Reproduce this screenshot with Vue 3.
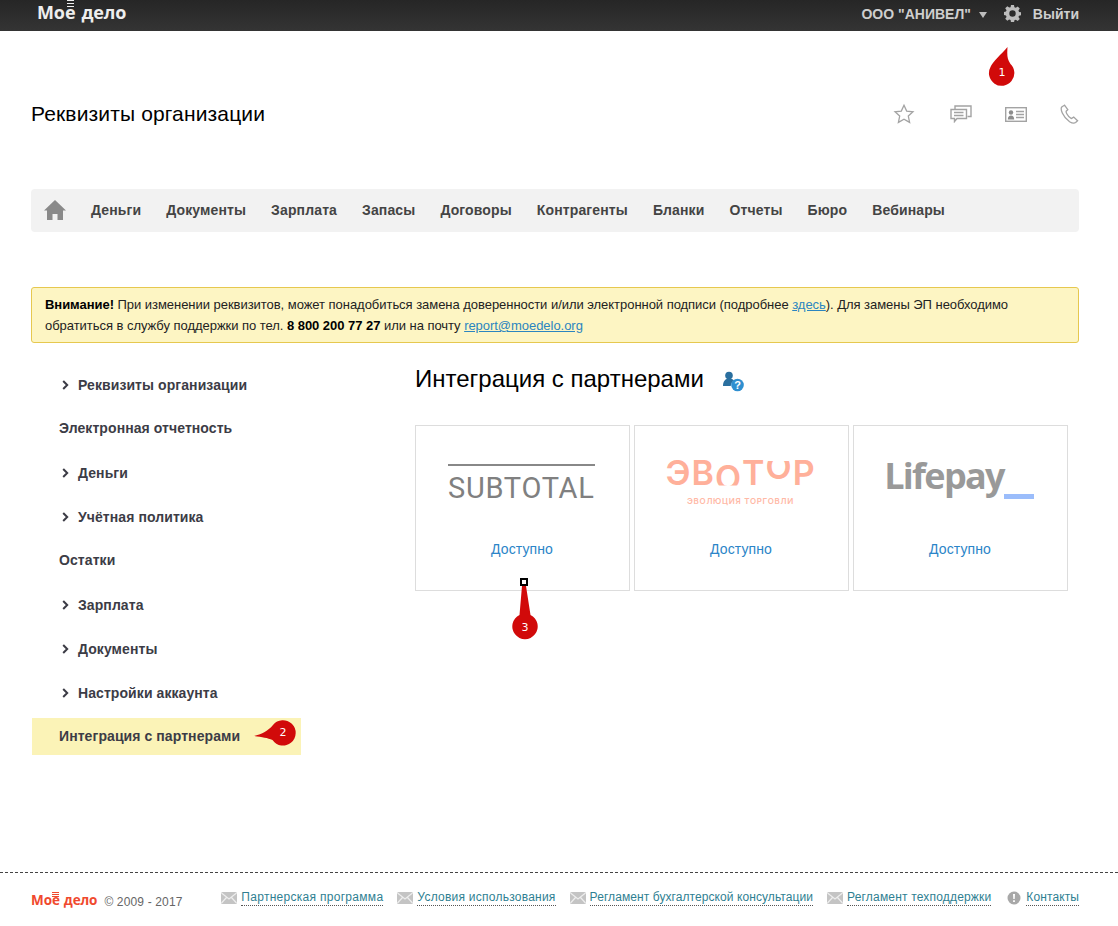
<script setup>
const nav = ['Деньги','Документы','Зарплата','Запасы','Договоры','Контрагенты','Бланки','Отчеты','Бюро','Вебинары']
const side = [
  { t: 'Реквизиты организации', arrow: true },
  { t: 'Электронная отчетность' },
  { t: 'Деньги', arrow: true },
  { t: 'Учётная политика', arrow: true },
  { t: 'Остатки' },
  { t: 'Зарплата', arrow: true },
  { t: 'Документы', arrow: true },
  { t: 'Настройки аккаунта', arrow: true },
  { t: 'Интеграция с партнерами', active: true }
]
const links = [
  { t: 'Партнерская программа', ls: 0.29 },
  { t: 'Условия использования', ls: 0.24 },
  { t: 'Регламент бухгалтерской консультации', ls: 0.08 },
  { t: 'Регламент техподдержки', ls: 0.18 }
]
</script>

<template>
  <div class="page">
    <header class="topbar">
      <div class="logo">Мое<span class="logo-gap"></span>дело<i class="bars"></i></div>
      <div class="top-right">
        <span class="org">ООО "АНИВЕЛ"</span>
        <span class="caret"></span>
        <svg class="gear" width="17" height="17" viewBox="0 0 18 18"><path fill="#bdbdbd" fill-rule="evenodd" d="M7.400 0h3.200l.4 2.400 1.500.6 2-1.400 2.200 2.200-1.400 2 .6 1.500 2.100.4v3.200l-2.100.4-.6 1.500 1.400 2-2.200 2.200-2-1.400-1.500.6-.4 2.300H7.400L7 16l-1.500-.6-2 1.400-2.200-2.200 1.400-2L2.100 11 0 10.600V7.400L2.100 7l.6-1.500-1.400-2 2.200-2.200 2 1.400L7 2.400zM9 5.600a3.400 3.400 0 1 0 0 6.800 3.400 3.400 0 0 0 0-6.800z"/></svg>
        <span class="exit">Выйти</span>
      </div>
    </header>

    <div class="title-row">
      <h1>Реквизиты организации</h1>
      <div class="tools">
        <svg class="star" width="22" height="22" viewBox="0 0 22 22"><path fill="none" stroke="#a3a3a3" stroke-width="1.300" d="M11 2.200l2.700 5.900 6.300.7-4.700 4.300 1.300 6.300-5.600-3.200-5.600 3.200 1.300-6.300L2 8.800l6.300-.7z"/></svg>
        <svg width="22" height="18" viewBox="0 0 22 18"><g fill="none" stroke="#a3a3a3" stroke-width="1.400"><path d="M5 4V1h16v10.500h-3.500"/><path d="M1 4.500h15.500v9H7L4.500 16.500v-3H1z" fill="#fff"/><path d="M4 7.500h9.500M4 10.500h9.500"/></g></svg>
        <svg width="22" height="15" viewBox="0 0 22 15"><rect x=".7" y=".7" width="20.600" height="13.600" fill="none" stroke="#a3a3a3" stroke-width="1.400"/><circle cx="6" cy="5.500" r="2.200" fill="#8c8c8c"/><path fill="#8c8c8c" d="M2.800 12.500c0-2.700 1.300-4 3.200-4s3.200 1.300 3.200 4z"/><path stroke="#a3a3a3" stroke-width="1.400" d="M11 4.500h8M11 7.500h8M11 10.500h8"/></svg>
        <svg width="19" height="20" viewBox="0 0 19 20"><path fill="none" stroke="#a3a3a3" stroke-width="1.300" d="M4.500 1.200L2 2.700C.8 3.700 1 6 2.300 9c1.500 3.400 4 6.300 7.300 8.700 2.700 1.700 4.700 1.900 6 .9l2-1.800-3.900-3.700-2.300 1.500C9.700 13.900 8 12 6.800 9.700 6.100 8.400 6 7.600 6.200 7.200l1.600-1.500z"/></svg>
      </div>
    </div>

    <nav class="menu">
      <svg width="22" height="20" viewBox="0 0 22 20"><path fill="#8a8a8a" d="M11 0l11 10.500h-3V20h-5.500v-6h-5v6H3V10.500H0z"/></svg>
      <a v-for="n in nav" :key="n">{{ n }}</a>
    </nav>

    <div class="alert">
      <b>Внимание!</b> При изменении реквизитов, может понадобиться замена доверенности и/или электронной подписи (подробнее <a>здесь</a>). Для замены ЭП необходимо обратиться в службу поддержки по тел. <b>8 800 200 77 27</b> или на почту <a>report@moedelo.org</a>
    </div>

    <div class="columns">
      <aside class="side">
        <div v-for="s in side" :key="s.t" class="side-item" :class="{ active: s.active, plain: !s.arrow }">
          <svg v-if="s.arrow" class="chev" width="7" height="10" viewBox="0 0 7 10"><path fill="none" stroke="#3c3c46" stroke-width="2" d="M1.200 1l4 4-4 4"/></svg>
          <span>{{ s.t }}</span>
        </div>
      </aside>
      <main class="main">
        <div class="heading">
          <h2>Интеграция с партнерами</h2>
          <svg width="21" height="21" viewBox="0 0 21 21"><circle cx="6" cy="4.500" r="3.800" fill="#2a6f9f"/><path fill="#2a6f9f" d="M0 15c0-5 2.500-7.500 6-7.500 2.500 0 4 .8 5 2.200-2 1-3.200 3-3.200 5.300z"/><circle cx="14.500" cy="14" r="6.300" fill="#2f8fd0"/><text x="14.500" y="18" text-anchor="middle" class="q">?</text></svg>
        </div>
        <div class="cards">
          <div class="card">
            <div class="brand">
              <div class="subtotal">SUBTOTAL</div>
            </div>
            <a>Доступно</a>
          </div>
          <div class="card">
            <div class="brand">
              <div class="evotor">
                <div class="evo-name">ЭВ<span class="o-up">О</span>Т<span class="o-down">О</span>Р</div>
                <div class="evo-sub">ЭВОЛЮЦИЯ ТОРГОВЛИ</div>
              </div>
            </div>
            <a>Доступно</a>
          </div>
          <div class="card">
            <div class="brand">
              <div class="lifepay">Lifepay<i></i></div>
            </div>
            <a>Доступно</a>
          </div>
        </div>
      </main>
    </div>

    <footer class="footer">
      <div class="flogo">Мое<span class="logo-gap small"></span>дело<i class="bars small"></i></div>
      <span class="copy">© 2009 - 2017</span>
      <div class="flinks">
        <span v-for="l in links" :key="l.t" class="flink">
          <svg width="16" height="12" viewBox="0 0 16 12"><rect width="16" height="12" rx="1.500" fill="#c4c4c4"/><path fill="none" stroke="#eee" stroke-width="1.200" d="M.5 1L8 7l7.500-6M.5 11l5-5.500M15.500 11l-5-5.500"/></svg>
          <a :style="{ letterSpacing: l.ls + 'px' }">{{ l.t }}</a>
        </span>
        <span class="flink contact">
          <svg width="14" height="14" viewBox="0 0 14 14"><circle cx="7" cy="7" r="6.500" fill="#a8a8a8"/><path fill="#fff" d="M6 3h2l-.3 5H6.300zM6.100 9.300h1.800V11H6.100z"/></svg>
          <a>Контакты</a>
        </span>
      </div>
    </footer>

    <svg class="marks" width="1118" height="926" viewBox="0 0 1118 926">
      <path fill="#d10a0a" d="M1007.500 47c-.5 8-.5 12 3 17a12.700 12.700 0 1 1-20 3c2-5 11-13 17-20z"/>
      <text x="1002" y="76" class="num">1</text>
      <path fill="#d10a0a" d="M254 736c7-1.500 14-5 19-11a12.700 12.700 0 1 1-.5 15c-5-2-10-3-18.500-4z"/>
      <text x="283" y="736" class="num">2</text>
      <path fill="#d10a0a" d="M522 586h4l4.500 29a12.700 12.700 0 1 1-11 0z"/>
      <text x="525" y="631" class="num">3</text>
      <rect x="521" y="579" width="6" height="6" fill="#fff" stroke="#000" stroke-width="2"/>
    </svg>
  </div>
</template>

<style>
html, body { margin: 0; background: #fff; }
</style>

<style scoped>
.page {
  position: relative;
  width: 1118px;
  height: 926px;
  overflow: hidden;
  font-family: "Liberation Sans", Arial, sans-serif;
  color: #000;
}
.topbar {
  height: 31px;
  background: linear-gradient(#262626, #343434);
  display: flex;
  align-items: center;
  justify-content: space-between;
  padding: 0 39px 0 37px;
}
.logo {
  position: relative;
  display: flex;
  align-items: baseline;
  color: #eee;
  font: 700 18px/31px "Open Sans", sans-serif;
  letter-spacing: -.1px;
  margin-top: -6px;
}
.logo-gap { width: 6px; }
.logo-gap.small { width: 4px; }
.bars {
  position: absolute;
  left: 30px;
  top: 3px;
  width: 7px;
  height: 7px;
  background: repeating-linear-gradient(#eee 0 1.500px, transparent 1.500px 3px);
}
.top-right {
  display: flex;
  align-items: center;
  color: #cfcfcf;
  font-size: 14px;
  font-weight: 700;
  margin-top: -4px;
}
.caret {
  width: 0;
  height: 0;
  margin: 3px 0 0 8px;
  border: 4px solid transparent;
  border-top: 6px solid #bdbdbd;
  border-bottom: 0;
}
.gear { margin: 0 12px 0 17px; }
.title-row {
  height: 158px;
  display: flex;
  align-items: center;
  justify-content: space-between;
  padding: 8px 39px 0 31px;
  box-sizing: border-box;
}
h1 {
  margin: 0;
  font-size: 21px;
  letter-spacing: .14px;
  font-weight: 400;
  line-height: 24px;
}
.tools {
  display: flex;
  align-items: center;
  gap: 33px;
}
.star { margin-right: 2px; }
.menu {
  height: 43px;
  margin: 0 39px 0 31px;
  padding: 0 0 2px 13px;
  box-sizing: border-box;
  background: #f2f2f2;
  border-radius: 4px;
  display: flex;
  align-items: center;
  gap: 25px;
  font-size: 14px;
  font-weight: 700;
  letter-spacing: .13px;
  color: #444;
}
.alert {
  margin: 55px 39px 0 31px;
  height: 56px;
  box-sizing: border-box;
  padding: 6px 13px;
  background: #fdf5c3;
  border: 1px solid #e6c84f;
  border-radius: 3px;
  font-size: 13px;
  letter-spacing: -.04px;
  line-height: 21px;
  color: #222;
}
.alert a { color: #2b85c0; text-decoration: underline; }
.alert b { color: #000; }
.columns {
  display: flex;
  height: 529px;
  padding-left: 32px;
}
.side {
  width: 269px;
  margin-top: 20px;
}
.side-item {
  height: 44px;
  display: flex;
  align-items: center;
  padding-left: 27px;
  font-size: 14px;
  font-weight: 700;
  letter-spacing: .08px;
  color: #3c3c46;
  box-sizing: border-box;
}
.side-item.plain { padding-bottom: 2px; }
.chev { margin: 0 9px 0 3px; }
.side-item.active {
  height: 37px;
  margin-top: 3px;
  padding-bottom: 1px;
  background: #fbf3b7;
}
.main { margin-left: 114px; width: 660px; }
.heading {
  display: flex;
  align-items: center;
  height: 28px;
  margin-top: 22px;
}
h2 {
  margin: 0;
  font-size: 24px;
  font-weight: 400;
  line-height: 28px;
}
.heading svg { margin: 4px 0 0 19px; }
.q {
  fill: #fff;
  font: 700 11px "Liberation Sans", sans-serif;
}
.cards {
  display: flex;
  gap: 4px;
  margin-top: 32px;
}
.card {
  width: 215px;
  height: 166px;
  box-sizing: border-box;
  border: 1px solid #ddd;
  display: flex;
  flex-direction: column;
  align-items: center;
}
.card a {
  color: #2b85c8;
  font-size: 14px;
  letter-spacing: .1px;
  line-height: 16px;
  margin: 6px 1px 0 0;
}
.brand {
  height: 109px;
  width: 100%;
  display: flex;
  flex-direction: column;
  align-items: center;
}
.subtotal {
  margin: 38px 2px 0 0;
  padding-top: 3px;
  width: 147px;
  border-top: 2px solid #888;
  color: #808080;
  font: 400 29px/38px Roboto, sans-serif;
  letter-spacing: .7px;
  white-space: nowrap;
}
.evotor { margin: 30px 2px 0 0; text-align: center; }
.evo-name {
  color: #ffb09a;
  font: 600 34px/34px Inter, sans-serif;
  letter-spacing: 1px;
  white-space: nowrap;
  height: 34px;
}
.o-up, .o-down { display: inline-block; }
.o-up { clip-path: inset(0 0 28% 0); transform: translateY(5px); }
.o-down { clip-path: inset(32% 0 0 0); transform: translateY(-6px); }
.evo-sub {
  color: #ffb9a6;
  font: 600 8px/12px Inter, sans-serif;
  letter-spacing: .7px;
  margin-top: 5px;
}
.lifepay {
  margin: 27px 3px 0 0;
  display: flex;
  align-items: flex-end;
  color: #999;
  font: 700 36px/46px "Open Sans", sans-serif;
  letter-spacing: -1.700px;
}
.lifepay i {
  width: 30px;
  height: 5px;
  background: #9bbdfb;
}
.footer {
  height: 54px;
  border-top: 1px dashed #444;
  padding: 0 39px 0 31px;
  display: flex;
  align-items: center;
  box-sizing: border-box;
}
.flogo {
  position: relative;
  display: flex;
  align-items: baseline;
  color: #f0492e;
  font: 700 13.500px/20px "Open Sans", sans-serif;
  letter-spacing: -.1px;
}
.bars.small {
  left: 21px;
  top: 2px;
  width: 7px;
  height: 5px;
  background: repeating-linear-gradient(#f0492e 0 1px, transparent 1px 2px);
}
.copy {
  margin: 4px 0 0 7px;
  font-size: 12px;
  letter-spacing: .15px;
  color: #666;
}
.flinks {
  margin-left: auto;
  display: flex;
  gap: 14px;
  font-size: 12px;
  margin-top: -3px;
}
.flink { display: flex; align-items: center; gap: 4px; }
.flink.contact { gap: 5px; margin-left: 2px; letter-spacing: .1px; }
.flink a {
  color: #2f7f92;
  border-bottom: 1px dotted #555;
  line-height: 15px;
  white-space: nowrap;
}
.marks {
  position: absolute;
  left: 0;
  top: 0;
  pointer-events: none;
}
.num {
  fill: #fff;
  font: 400 11px "DejaVu Sans", sans-serif;
  text-anchor: middle;
}
</style>
